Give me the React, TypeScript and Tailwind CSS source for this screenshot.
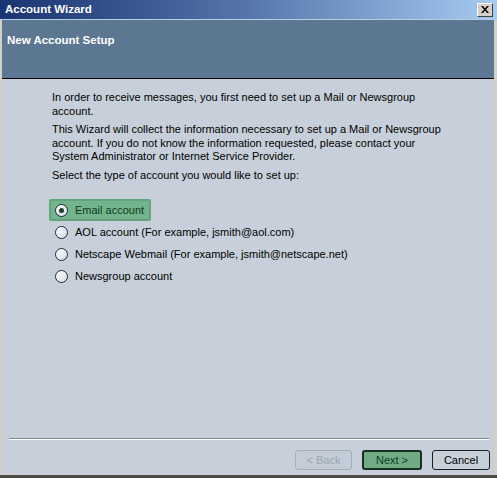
import { useState } from "react";

const options = [
  { id: "email", label: "Email account" },
  { id: "aol", label: "AOL account (For example, jsmith@aol.com)" },
  { id: "webmail", label: "Netscape Webmail (For example, jsmith@netscape.net)" },
  { id: "news", label: "Newsgroup account" },
];

function Radio({ checked }: { checked: boolean }) {
  return (
    <span className="flex h-[13px] w-[13px] items-center justify-center rounded-full border border-[#1c2a38] bg-gradient-to-br from-[#ffffff] to-[#d5dde6]">
      {checked && <span className="h-[5px] w-[5px] rounded-full bg-[#1e3d2a]" />}
    </span>
  );
}

export default function App() {
  const [selected, setSelected] = useState("email");

  return (
    <div
      className="flex h-[478px] w-[497px] flex-col overflow-hidden bg-[#d4d0c8] text-[11px] text-black"
      style={{ fontFamily: '"Liberation Sans", Arial, sans-serif' }}
    >
      {/* title bar */}
      <div className="flex h-[19px] items-center justify-between bg-gradient-to-r from-[#1a3472] via-[#5676ab] to-[#a8cbf1] pl-[5px] pr-[4px]">
        <span className="text-[11.5px] font-bold text-white">Account Wizard</span>
        <button className="flex h-[14px] w-[16px] items-center justify-center border border-t-white border-l-white border-r-[#404040] border-b-[#404040] bg-[#d4d0c8]">
          <svg width="8" height="7" viewBox="0 0 8 7">
            <path d="M0 0h2l2 2.5L6 0h2L5 3.5 8 7H6L4 4.5 2 7H0l3-3.5z" fill="#000" />
          </svg>
        </button>
      </div>
      <div className="h-px bg-[#b9cde2]" />

      <div className="flex flex-1 flex-col pl-[2px] pr-[3px]">
        {/* header */}
        <div className="h-[59px] border-b border-black bg-[#5b7792] pl-[5px] pt-[12px]">
          <span className="text-[11.5px] font-bold text-white">New Account Setup</span>
        </div>

        {/* body */}
        <div className="flex flex-1 flex-col bg-[#c7d0da]">
          <div className="flex flex-col gap-[5px] pl-[50px] pt-[12px] leading-[13.5px]">
            <p>
              In order to receive messages, you first need to set up a Mail or Newsgroup
              <br />
              account.
            </p>
            <p>
              This Wizard will collect the information necessary to set up a Mail or Newsgroup
              <br />
              account. If you do not know the information requested, please contact your
              <br />
              System Administrator or Internet Service Provider.
            </p>
            <p>Select the type of account you would like to set up:</p>
          </div>

          <div className="mt-[17px] flex flex-col pl-[47px]">
            {options.map((o) => {
              const on = selected === o.id;
              return (
                <label
                  key={o.id}
                  onClick={() => setSelected(o.id)}
                  className={
                    on
                      ? "flex h-[22px] w-fit items-center gap-[7px] rounded-[2px] border-2 border-[#64a47c] bg-[#74b48c] pl-[4px] pr-[5px] text-[#0f3a1c]"
                      : "flex h-[22px] w-fit items-center gap-[7px] border-2 border-transparent pl-[4px] pr-[5px]"
                  }
                >
                  <Radio checked={on} />
                  <span>{o.label}</span>
                </label>
              );
            })}
          </div>

          <div className="flex-1" />

          <div className="ml-[7px] mr-[5px] border-b border-t border-b-white border-t-[#7c8796]" />

          <div className="flex justify-end gap-[10px] pb-[4px] pr-[4px] pt-[10px]">
            <button
              disabled
              className="h-[20px] w-[57px] rounded-[3px] border border-[#a4afbd] bg-[#c3ccd7] text-[#9aa5b3]"
            >
              &lt; Back
            </button>
            <button className="h-[20px] w-[60px] rounded-[3px] border-2 border-[#14321f] bg-[#6fac85] text-[#113c20]">
              Next &gt;
            </button>
            <button className="h-[20px] w-[58px] rounded-[3px] border border-[#1e1e1e] bg-[#c7d0da]">
              Cancel
            </button>
          </div>
        </div>
      </div>

      <div className="h-px bg-[#d4d0c8]" />
      <div className="h-[3px] bg-[#4a4a4a]" />
    </div>
  );
}
